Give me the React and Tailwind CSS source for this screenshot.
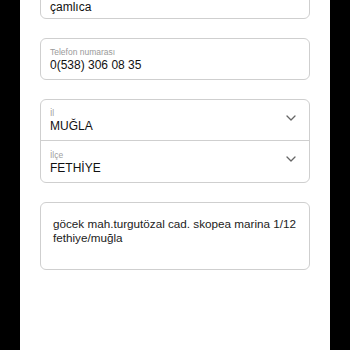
import React from "react";

function Chevron() {
  return (
    <svg width="10" height="6" viewBox="0 0 10 6" fill="none" className="shrink-0">
      <path d="M1 1 L5 5 L9 1" stroke="#666" strokeWidth="1.3" strokeLinecap="round" strokeLinejoin="round" />
    </svg>
  );
}

function Field({ label, value, className = "" }) {
  return (
    <div className={"h-[42px] rounded-[6px] border border-[#cfcfcf] px-[9px] pt-[1px] flex flex-col justify-center " + className}>
      {label && <div className="text-[8.5px] leading-[12px] text-[#9a9a9a]">{label}</div>}
      <div className="text-[12px] leading-[15px] text-[#111]">{value}</div>
    </div>
  );
}

function SelectRow({ label, value, border }) {
  return (
    <div className={"h-[41px] flex items-center justify-between pl-[9px] pr-[13px] pt-[1px] " + (border ? "border-b border-[#cfcfcf]" : "")}>
      <div className="flex flex-col">
        <div className="text-[8.5px] leading-[12px] text-[#a0a0a0]">{label}</div>
        <div className="text-[12px] leading-[15px] text-[#111]">{value}</div>
      </div>
      <div className="-mt-[6px]"><Chevron /></div>
    </div>
  );
}

export default function App() {
  return (
    <div className="w-[350px] h-[350px] bg-black flex justify-center overflow-hidden" style={{ fontFamily: "'Liberation Sans', Arial, sans-serif" }}>
      <div className="w-[310px] h-full bg-white px-[20px] flex flex-col gap-[19px]">
        <div className="h-[42px] mt-[-23px] rounded-[6px] border border-[#cfcfcf] px-[9px] pb-[3px] flex flex-col justify-end">
          <div className="text-[12px] leading-[15px] text-[#111]">çamlıca</div>
        </div>
        <Field label="Telefon numarası" value="0(538) 306 08 35" />
        <div className="rounded-[6px] border border-[#cfcfcf] flex flex-col">
          <SelectRow label="İl" value="MUĞLA" border />
          <SelectRow label="İlçe" value="FETHİYE" />
        </div>
        <div className="h-[68px] rounded-[6px] border border-[#cfcfcf] px-[12px] pt-[14px] text-[11.7px] leading-[14px] text-[#222]">
          göcek mah.turgutözal cad. skopea marina 1/12 fethiye/muğla
        </div>
      </div>
    </div>
  );
}
